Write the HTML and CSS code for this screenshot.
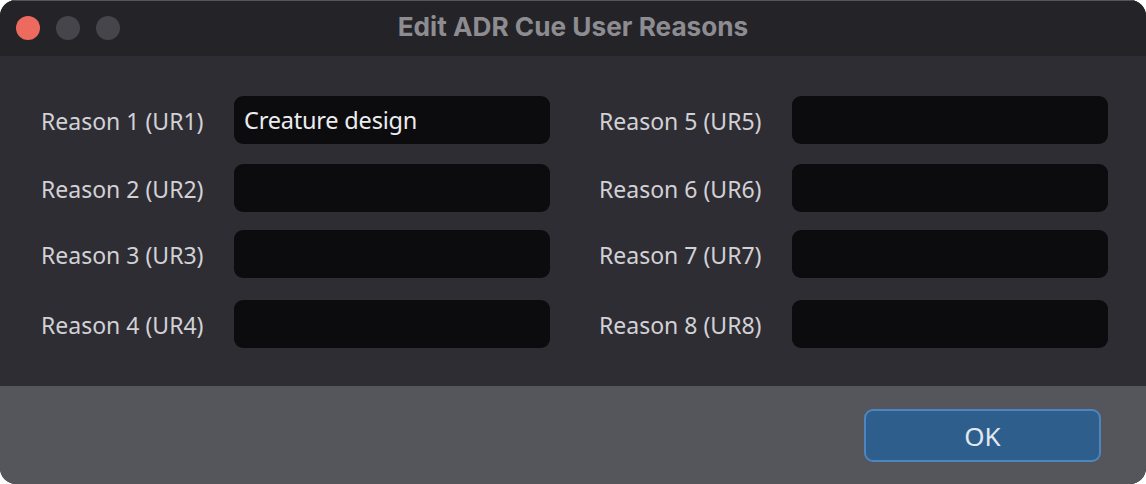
FILE: index.html
```html
<!DOCTYPE html>
<html>
<head>
<meta charset="utf-8">
<link rel="stylesheet" href="styles.css">
</head>
<body>
<div class="window">
  <div class="titlebar">
    <div class="lights">
      <span class="light red"></span>
      <span class="light gray"></span>
      <span class="light gray"></span>
    </div>
    <div class="title">Edit ADR Cue User Reasons</div>
  </div>
  <div class="content">
    <div class="col">
      <div class="row"><label class="label">Reason 1 (UR1)</label><div class="field">Creature design</div></div>
      <div class="row"><label class="label">Reason 2 (UR2)</label><div class="field"></div></div>
      <div class="row r3"><label class="label">Reason 3 (UR3)</label><div class="field"></div></div>
      <div class="row r4"><label class="label">Reason 4 (UR4)</label><div class="field"></div></div>
    </div>
    <div class="col">
      <div class="row"><label class="label">Reason 5 (UR5)</label><div class="field"></div></div>
      <div class="row"><label class="label">Reason 6 (UR6)</label><div class="field"></div></div>
      <div class="row r3"><label class="label">Reason 7 (UR7)</label><div class="field"></div></div>
      <div class="row r4"><label class="label">Reason 8 (UR8)</label><div class="field"></div></div>
    </div>
  </div>
  <div class="footer">
    <button class="ok">OK</button>
  </div>
</div>
</body>
</html>
```
FILE: styles.css
```css
html, body {
  margin: 0;
  padding: 0;
  background: #ffffff;
}
.window {
  width: 1146px;
  height: 484px;
  border-radius: 16px;
  overflow: hidden;
  display: flex;
  flex-direction: column;
  background: #2e2d33;
}
.titlebar {
  height: 56px;
  box-sizing: border-box;
  border-top: 1px solid #56565a;
  background: #242328;
  display: flex;
  align-items: center;
  position: relative;
}
.lights {
  display: flex;
  gap: 16px;
  padding-left: 16px;
  position: absolute;
  left: 0;
  top: 15px;
}
.light {
  width: 24px;
  height: 24px;
  border-radius: 50%;
  display: block;
}
.light.red { background: #ec6a5e; }
.light.gray { background: #46454b; }
.title {
  flex: 1;
  text-align: center;
  font-family: Inter, "Liberation Sans", Arial, sans-serif;
  font-weight: bold;
  font-size: 26.2px;
  color: #8d8c91;
  margin-top: -4px;
}
.content {
  height: 330px;
  box-sizing: border-box;
  padding: 40px 0 0 41px;
  display: flex;
  gap: 49px;
  background: #2e2d33;
}
.col {
  display: flex;
  flex-direction: column;
}
.row {
  display: flex;
  align-items: center;
  height: 48px;
  margin-bottom: 20px;
}
.row.r3 { margin-top: -2px; }
.row.r4 { margin-top: 2px; }
.label {
  width: 193px;
  font-family: "Noto Sans", "Open Sans", sans-serif;
  font-size: 23px;
  color: #d2d1d6;
  padding-top: 2px;
}
.field {
  width: 316px;
  height: 48px;
  box-sizing: border-box;
  border-radius: 9px;
  background: #0c0c0e;
  font-family: "Noto Sans", "Open Sans", sans-serif;
  font-size: 23.5px;
  color: #ececee;
  padding-left: 10px;
  line-height: 48px;
  letter-spacing: -0.2px;
}
.footer {
  flex: 1;
  background: #55555c;
  display: flex;
  justify-content: flex-end;
  align-items: flex-start;
  padding: 23px 45px 0 0;
}
.ok {
  width: 237px;
  height: 53px;
  box-sizing: border-box;
  border: 2px solid #4d86bf;
  border-radius: 9px;
  background: #2e5e8c;
  color: #e1e8f0;
  font-family: "Noto Sans", "Open Sans", sans-serif;
  font-size: 26px;
  padding: 0;
}
```
